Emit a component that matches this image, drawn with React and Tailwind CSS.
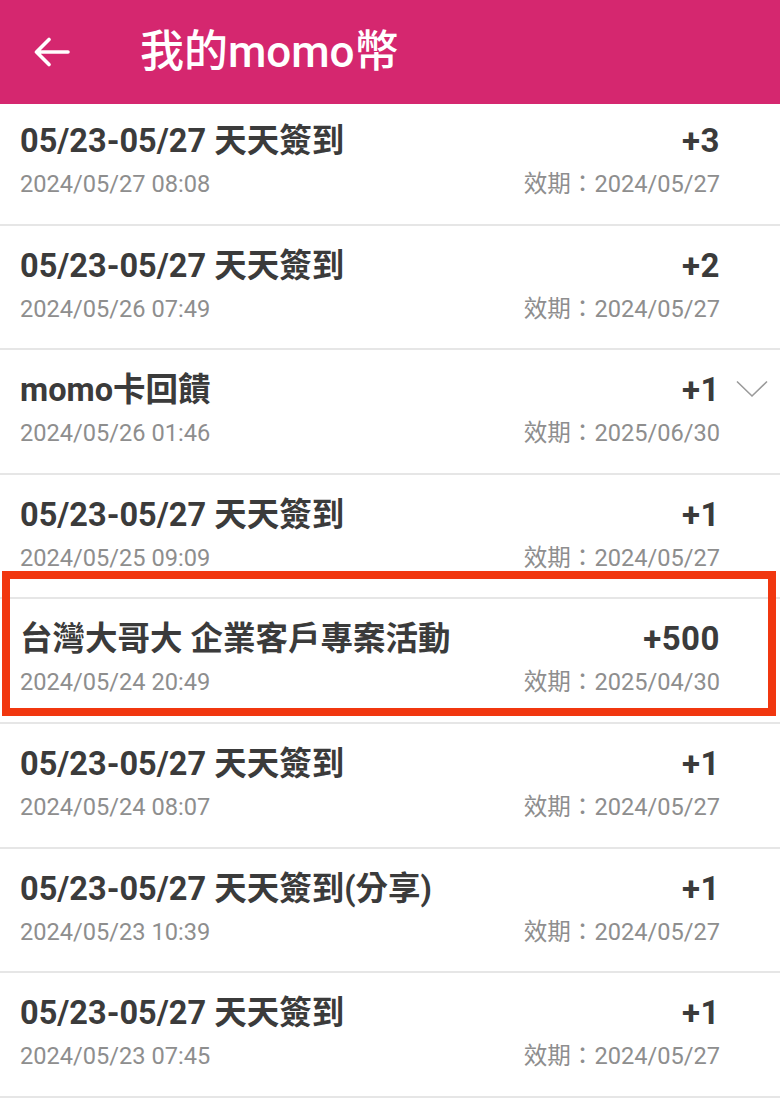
import React from "react";

const rows = [
  { title: "05/23-05/27 天天簽到", time: "2024/05/27 08:08", pts: "+3", exp: "2024/05/27" },
  { title: "05/23-05/27 天天簽到", time: "2024/05/26 07:49", pts: "+2", exp: "2024/05/27" },
  { title: "momo卡回饋", time: "2024/05/26 01:46", pts: "+1", exp: "2025/06/30", more: true },
  { title: "05/23-05/27 天天簽到", time: "2024/05/25 09:09", pts: "+1", exp: "2024/05/27" },
  { title: "台灣大哥大 企業客戶專案活動", time: "2024/05/24 20:49", pts: "+500", exp: "2025/04/30" },
  { title: "05/23-05/27 天天簽到", time: "2024/05/24 08:07", pts: "+1", exp: "2024/05/27" },
  { title: "05/23-05/27 天天簽到(分享)", time: "2024/05/23 10:39", pts: "+1", exp: "2024/05/27" },
  { title: "05/23-05/27 天天簽到", time: "2024/05/23 07:45", pts: "+1", exp: "2024/05/27" },
];

const font = { fontFamily: "Roboto, 'Noto Sans CJK TC', sans-serif" };

const Row = ({ row }) => (
  <div className="relative h-[124.6px] border-b-2 border-[#e6e6e6] bg-white pl-[20px] pr-[60px] pt-[20px]">
    <div className="flex items-center justify-between">
      <span className="text-[32.5px] leading-[40px] font-bold text-[#3b3b3b]">{row.title}</span>
      <span className="text-[33px] leading-[40px] font-bold tracking-[0.5px] text-[#3b3b3b]">{row.pts}</span>
    </div>
    <div className="mt-[8px] flex items-center justify-between text-[23.6px] leading-[30px] text-[#8e8e8e]">
      <span>{row.time}</span>
      <span>效期：{row.exp}</span>
    </div>
    {row.more && (
      <svg
        className="absolute right-[12px] top-[30px]"
        width="32"
        height="18"
        viewBox="0 0 32 18"
        fill="none"
      >
        <path d="M1 1.5 L16 16 L31 1.5" stroke="#9a9a9a" strokeWidth="1.6" />
      </svg>
    )}
  </div>
);

export default function App() {
  return (
    <div className="relative h-[1109px] w-[780px] overflow-hidden bg-white" style={font}>
      <header className="relative z-10 flex h-[104px] items-center bg-[#d5276f]">
        <svg className="ml-[34px]" width="36" height="30" viewBox="0 0 36 30" fill="none">
          <path
            d="M34 15 H3 M15 2.5 L2.5 15 L15 27.5"
            stroke="#ffffff"
            strokeWidth="3.6"
            strokeLinecap="round"
            strokeLinejoin="round"
          />
        </svg>
        <h1 className="ml-[70px] text-[44px] leading-none font-medium text-white">我的momo幣</h1>
      </header>

      <div className="-mt-[3px]">
        {rows.map((row, i) => (
          <Row key={i} row={row} />
        ))}
      </div>

      {/* highlight box */}
      <div className="pointer-events-none absolute left-[2px] top-[571px] h-[145px] w-[774px] border-[8px] border-[#f1370f]" />
    </div>
  );
}
